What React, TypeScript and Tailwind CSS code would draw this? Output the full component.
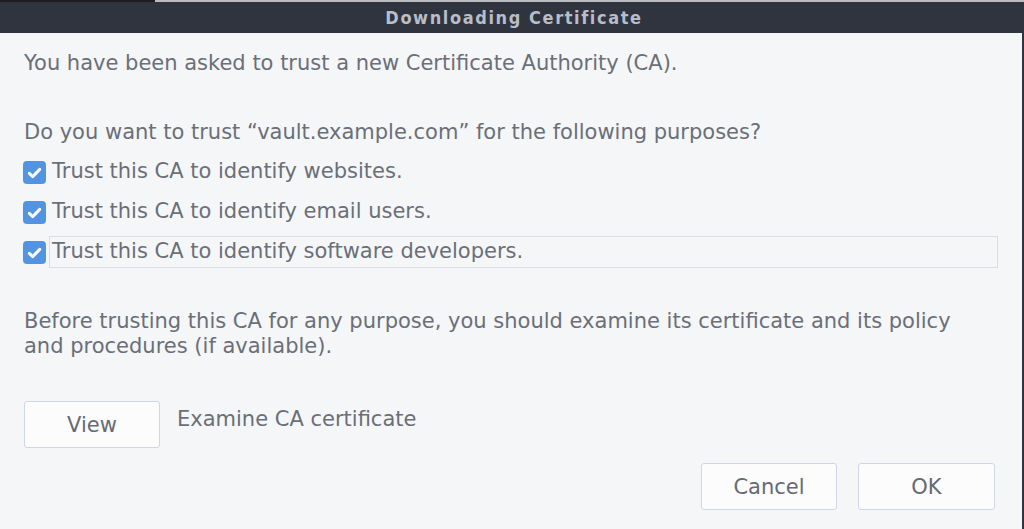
import * as React from 'react'

const font = { fontFamily: '"DejaVu Sans", "Noto Sans", sans-serif' }

function Check({ label, focused }: { label: string; focused?: boolean }) {
  return (
    <div className="flex h-8 items-center">
      <span className="-ml-px flex h-[23px] w-[23px] shrink-0 items-center justify-center rounded-[4px] bg-[#5294e2]">
        <svg viewBox="0 0 23 23" className="h-[23px] w-[23px]" fill="none">
          <path d="M6.3 12.3l3.4 3.3 7-7.2" stroke="#fff" strokeWidth="3" strokeLinecap="round" strokeLinejoin="round" />
        </svg>
      </span>
      <span
        className={
          'ml-[3px] flex h-8 items-center pl-[2px] ' +
          (focused ? 'w-[949px] border border-[#d8dde8]' : 'border border-transparent')
        }
      >
        {label}
      </span>
    </div>
  )
}

function Btn({ children, className = '' }: { children: React.ReactNode; className?: string }) {
  return (
    <button
      className={
        'flex h-[47px] w-[136px] items-center justify-center rounded-[3px] border border-[#cfd6e6] bg-[#fcfcfc] pt-[3px] text-[#666a74] ' +
        className
      }
    >
      {children}
    </button>
  )
}

export default function App() {
  return (
    <div className="flex h-[529px] w-[1024px] flex-col overflow-hidden bg-[#f5f6f7] text-[21px] text-[#6a6f78]" style={font}>
      {/* window manager strip */}
      <div className="flex h-[2px] shrink-0">
        <div className="w-[155px] bg-[#1b1d22]" />
        <div className="flex-1 bg-[#b9bbc0]" />
      </div>
      <div
        className="flex h-[31px] shrink-0 items-center justify-center bg-[#2f343f] pl-[4px] text-[18px] font-bold tracking-[1.6px] text-[#b8bdc7]"
        style={{ fontFamily: '"DejaVu Sans Condensed", "DejaVu Sans", sans-serif' }}
      >
        Downloading Certificate
      </div>

      <div className="flex flex-1 border-r-2 border-[#2f343f]">
        <div className="flex flex-1 flex-col pl-6">
          <p className="mt-[18px] leading-6">You have been asked to trust a new Certificate Authority (CA).</p>
          <p className="mt-[45px] leading-6">Do you want to trust “vault.example.com” for the following purposes?</p>

          <div className="mt-[12px] flex flex-col gap-2">
            <Check label="Trust this CA to identify websites." />
            <Check label="Trust this CA to identify email users." />
            <Check label="Trust this CA to identify software developers." focused />
          </div>

          <p className="mt-[41px] leading-[25px]">
            Before trusting this CA for any purpose, you should examine its certificate and its policy
            <br />
            and procedures (if available).
          </p>

          <div className="mt-[42px] flex items-start">
            <Btn>View</Btn>
            <span className="ml-[17px] mt-[6px] leading-6">Examine CA certificate</span>
          </div>

          <div className="mt-[15px] flex justify-end gap-[21px] pr-[27px]">
            <Btn className="w-[136px]">Cancel</Btn>
            <Btn className="w-[137px]">OK</Btn>
          </div>
        </div>
      </div>
    </div>
  )
}
